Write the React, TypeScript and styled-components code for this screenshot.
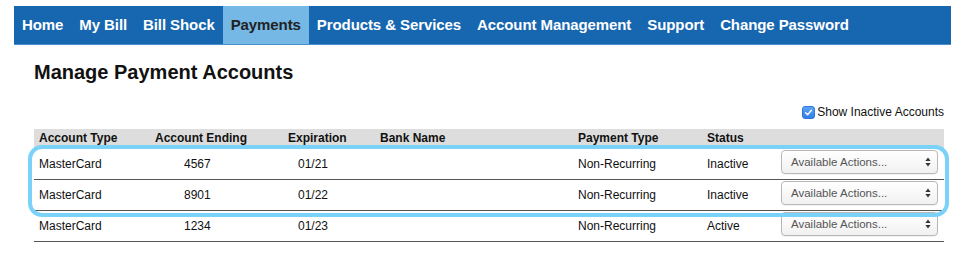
import React, { useState } from "react";
import styled, { createGlobalStyle } from "styled-components";

const GlobalStyle = createGlobalStyle`
  html, body {
    margin: 0;
    padding: 0;
    background: #ffffff;
    font-family: "Liberation Sans", Arial, Helvetica, sans-serif;
  }
`;

const navItems = [
  "Home",
  "My Bill",
  "Bill Shock",
  "Payments",
  "Products & Services",
  "Account Management",
  "Support",
  "Change Password",
];

const columns = [
  { title: "Account Type", width: 116 },
  { title: "Account Ending", width: 133 },
  { title: "Expiration", width: 92 },
  { title: "Bank Name", width: 198 },
  { title: "Payment Type", width: 129 },
  { title: "Status", width: 74 },
  { title: "", width: 168 },
];

const gridTemplate = columns.map((c) => `${c.width}px`).join(" ");

export default function App() {
  const [showInactive, setShowInactive] = useState<boolean>(true);

  // --------   결제 계정 데이터   ---------
  const accounts = [
    { id: 1, type: "MasterCard", ending: "4567", exp: "01/21", bank: "", payType: "Non-Recurring", status: "Inactive" },
    { id: 2, type: "MasterCard", ending: "8901", exp: "01/22", bank: "", payType: "Non-Recurring", status: "Inactive" },
    { id: 3, type: "MasterCard", ending: "1234", exp: "01/23", bank: "", payType: "Non-Recurring", status: "Active" },
  ];

  return (
    <>
      <GlobalStyle />
      <NavBar>
        {navItems.map((item) => (
          <NavItem key={item} $active={item === "Payments"}>
            {item}
          </NavItem>
        ))}
      </NavBar>
      <Content>
        <Title>Manage Payment Accounts</Title>
        <Toolbar>
          <CheckLabel onClick={() => setShowInactive(!showInactive)}>
            <CheckBox $checked={showInactive}>
              {showInactive && (
                <svg width="9" height="9" viewBox="0 0 9 9">
                  <path d="M1.6 4.8 L3.6 6.8 L7.4 2.2" fill="none" stroke="#fff" strokeWidth="1.4" strokeLinecap="round" strokeLinejoin="round" />
                </svg>
              )}
            </CheckBox>
            Show Inactive Accounts
          </CheckLabel>
        </Toolbar>
        <TableWrap>
          <HeaderRow>
            {columns.map((c, i) => (
              <HeaderCell key={i}>{c.title}</HeaderCell>
            ))}
          </HeaderRow>
          {accounts.map((a) => (
            <Row key={a.id}>
              <Cell>{a.type}</Cell>
              <Cell $indent={34}>{a.ending}</Cell>
              <Cell $indent={15}>{a.exp}</Cell>
              <Cell>{a.bank}</Cell>
              <Cell>{a.payType}</Cell>
              <Cell>{a.status}</Cell>
              <ActionCell>
                <Select>
                  Available Actions...
                  <svg width="6" height="10" viewBox="0 0 6 10">
                    <path d="M3 0.5 L5.6 4 L0.4 4 Z" fill="#333" />
                    <path d="M3 9.5 L5.6 6 L0.4 6 Z" fill="#333" />
                  </svg>
                </Select>
              </ActionCell>
            </Row>
          ))}
          <Highlight />
        </TableWrap>
      </Content>
    </>
  );
}

const NavBar = styled.nav`
  display: flex;
  margin: 6px 0 0 14px;
  width: 937px;
  height: 38px;
  background-color: #1766b0;
  border-bottom: 1px solid #4a8ecb;
`;

const NavItem = styled.div<{ $active?: boolean }>`
  padding: 0 8px;
  height: 38px;
  line-height: 37px;
  font-size: 15px;
  letter-spacing: -0.09px;
  font-weight: 700;
  white-space: nowrap;
  color: ${(p) => (p.$active ? "#222222" : "#ffffff")};
  background-color: ${(p) => (p.$active ? "#75b8e6" : "transparent")};
`;

const Content = styled.div`
  margin-left: 34px;
  width: 910px;
`;

const Title = styled.h1`
  margin: 15px 0 0 0;
  font-size: 20px;
  line-height: 24px;
  font-weight: 700;
  color: #111111;
`;

const Toolbar = styled.div`
  display: flex;
  justify-content: flex-end;
  align-items: center;
  height: 18px;
  margin-top: 19px;
`;

const CheckLabel = styled.label`
  display: flex;
  align-items: center;
  font-size: 12px;
  color: #111111;
  cursor: pointer;
`;

const CheckBox = styled.span<{ $checked: boolean }>`
  display: inline-flex;
  align-items: center;
  justify-content: center;
  width: 13px;
  height: 13px;
  margin-right: 2px;
  border-radius: 3px;
  box-sizing: border-box;
  background: ${(p) => (p.$checked ? "linear-gradient(#5aa4f7, #2f7fe8)" : "#ffffff")};
  border: 1px solid ${(p) => (p.$checked ? "#2d76d6" : "#aaaaaa")};
`;

const TableWrap = styled.div`
  position: relative;
  margin-top: 8px;
`;

const HeaderRow = styled.div`
  display: grid;
  grid-template-columns: ${gridTemplate};
  height: 19px;
  background-color: #dddddd;
  border-bottom: 1px solid #333333;
`;

const HeaderCell = styled.div`
  padding-left: 5px;
  font-size: 12px;
  font-weight: 700;
  line-height: 19px;
  color: #111111;
  white-space: nowrap;
`;

const Row = styled.div`
  display: grid;
  grid-template-columns: ${gridTemplate};
  height: 30px;
  align-items: center;
  border-bottom: 1px solid #555555;
  &:last-of-type {
    border-bottom-color: #333333;
  }
`;

const Cell = styled.div<{ $indent?: number }>`
  padding-left: ${(p) => p.$indent ?? 5}px;
  font-size: 12px;
  color: #111111;
  white-space: nowrap;
`;

const ActionCell = styled.div`
  align-self: start;
  padding: 1px 0 0 5px;
`;

const Select = styled.div`
  display: flex;
  justify-content: space-between;
  align-items: center;
  box-sizing: border-box;
  width: 157px;
  height: 24px;
  padding: 0 6px 0 9px;
  border: 1px solid #b8b8b8;
  border-radius: 4px;
  background: linear-gradient(#ffffff, #f1f1f1);
  font-size: 11.5px;
  color: #555555;
  box-shadow: 0 1px 1px rgba(0, 0, 0, 0.06);
`;

const Highlight = styled.div`
  position: absolute;
  left: -6px;
  top: 16px;
  width: 921px;
  height: 72px;
  box-sizing: border-box;
  border: 4px solid #7ad2f8;
  border-radius: 14px;
  pointer-events: none;
`;
